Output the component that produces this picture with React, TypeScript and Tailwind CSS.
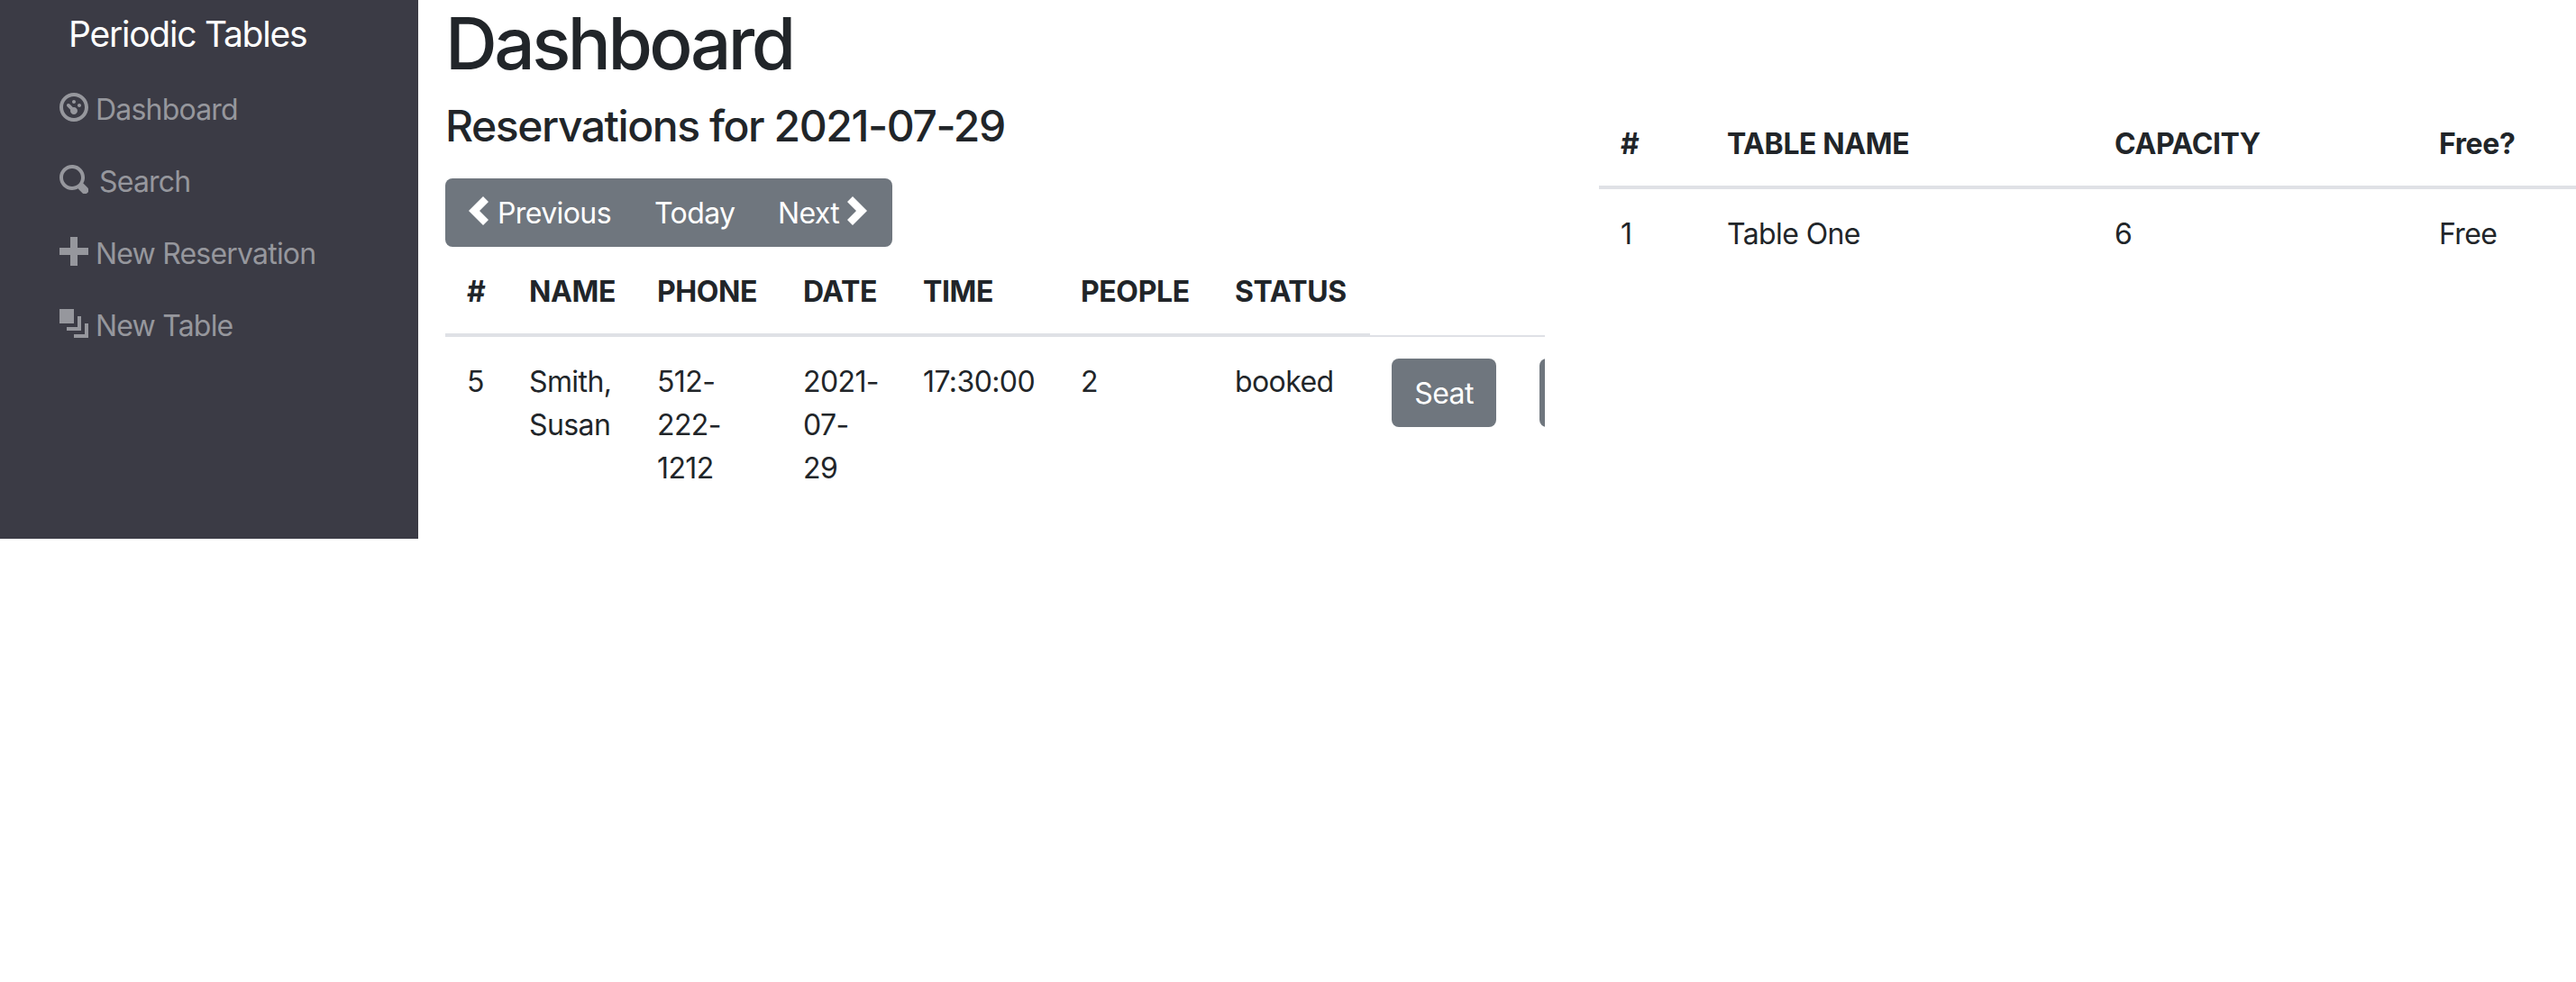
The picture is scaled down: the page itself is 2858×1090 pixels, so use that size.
import React from "react";

const P: Record<string, string> = {
  dashboard:
    "M4 0c-2.2 0-4 1.8-4 4s1.8 4 4 4 4-1.8 4-4-1.8-4-4-4zm0 1c1.66 0 3 1.34 3 3s-1.34 3-3 3-3-1.34-3-3 1.34-3 3-3zm0 1c-.28 0-.5.22-.5.5s.22.5.5.5.5-.22.5-.5-.22-.5-.5-.5zm-1.66 1a.5.5 0 0 0-.19.84l.91.91c-.02.08-.06.16-.06.25 0 .55.45 1 1 1s1-.45 1-1-.45-1-1-1c-.09 0-.17.04-.25.06l-.91-.91a.5.5 0 0 0-.44-.16.5.5 0 0 0-.06 0zm3.16 0c-.28 0-.5.22-.5.5s.22.5.5.5.5-.22.5-.5-.22-.5-.5-.5z",
  search:
    "M3.5 0c-1.93 0-3.5 1.57-3.5 3.5s1.57 3.5 3.5 3.5c.59 0 1.17-.14 1.66-.41a1 1 0 0 0 .13.13l1 1a1.02 1.02 0 1 0 1.44-1.44l-1-1a1 1 0 0 0-.16-.13c.27-.49.44-1.06.44-1.66 0-1.93-1.57-3.5-3.5-3.5zm0 1c1.39 0 2.5 1.11 2.5 2.5 0 .66-.24 1.27-.66 1.72-.01.01-.02.02-.03.03a1 1 0 0 0-.13.13c-.44.4-1.04.63-1.69.63-1.39 0-2.5-1.11-2.5-2.5s1.11-2.5 2.5-2.5z",
  plus: "M3 0v3h-3v2h3v3h2v-3h3v-2h-3v-3h-2z",
  layers: "M0 0v4h4v-4h-4zm5 2v3h-3v1h4v-4h-1zm2 2v3h-3v1h4v-4h-1z",
  left: "M5 0l-4 4 4 4 1.5-1.5-2.5-2.5 2.5-2.5-1.5-1.5z",
  right: "M2.5 0l-1.5 1.5 2.5 2.5-2.5 2.5 1.5 1.5 4-4-4-4z",
};

function Icon({ name, className }: { name: string; className: string }) {
  return (
    <svg viewBox="0 0 8 8" className={className} fill="currentColor" aria-hidden="true">
      <path d={P[name]} />
    </svg>
  );
}

const nav = [
  { icon: "dashboard", label: "Dashboard", gap: "gap-[8px]" },
  { icon: "search", label: "Search", gap: "gap-[12px]" },
  { icon: "plus", label: "New Reservation", gap: "gap-[8px]" },
  { icon: "layers", label: "New Table", gap: "gap-[8px]" },
];

const th = "px-[24px] pt-[26px] pb-[22px] text-left font-bold border-b-2 border-[#dfe1e6] whitespace-nowrap align-top tracking-[-0.4px]";
const td = "px-[24px] pt-[26px] pb-[22px] border-t-2 border-[#dfe1e6] align-top tracking-[-0.6px]";
const tdBtn = "px-[24px] pt-[24px] pb-[24px] border-t-2 border-[#dfe1e6] align-top tracking-[-0.6px]";

export default function App() {
  return (
    <div className="flex items-start w-[2858px] h-[1090px] overflow-hidden bg-white text-[32px] leading-[48px] text-[#212529] font-['Inter','Liberation_Sans',sans-serif]">
      <aside className="w-[464px] h-[598px] shrink-0 bg-[#3b3b45] pl-[66px]">
        <div className="pl-[10px] h-[76px] mb-[6px] flex items-center text-[39px] tracking-[-1.25px] text-white">Periodic Tables</div>
        <nav className="flex flex-col">
          {nav.map((n) => (
            <a key={n.label} className={`h-[80px] flex items-center ${n.gap} text-[#96979d] tracking-[-0.8px]`}>
              <Icon name={n.icon} className="w-[32px] h-[32px] -mt-[6px]" />
              <span>{n.label}</span>
            </a>
          ))}
        </nav>
      </aside>

      <main className="w-[1280px] shrink-0 px-[30px]">
        <h1 className="h-[96px] text-[80px] leading-[96px] font-medium tracking-[-3.5px]">Dashboard</h1>
        <h4 className="mt-[15px] h-[58px] text-[48px] leading-[58px] font-medium tracking-[-1.42px]">Reservations for 2021-07-29</h4>
        <div className="mt-[29px] w-[496px] h-[76px] rounded-[8px] bg-[#6f767e] text-white flex items-center pl-[26px] tracking-[-0.6px]">
          <span className="flex items-center w-[206px] pt-[2px]">
            <Icon name="left" className="w-[32px] h-[32px] -mt-[6px] -ml-[4px] mr-[4px]" />
            Previous
          </span>
          <span className="w-[137px] pt-[2px]">Today</span>
          <span className="flex items-center pt-[2px]">
            Next
            <Icon name="right" className="w-[32px] h-[32px] -mt-[6px] ml-[5px]" />
          </span>
        </div>
        <div className="w-[1220px] overflow-hidden">
          <table className="border-separate border-spacing-0 table-fixed w-[1420px]">
            <colgroup>
              <col className="w-[69px]" />
              <col className="w-[142px]" />
              <col className="w-[162px]" />
              <col className="w-[133px]" />
              <col className="w-[175px]" />
              <col className="w-[171px]" />
              <col className="w-[174px]" />
              <col className="w-[164px]" />
              <col className="w-[230px]" />
            </colgroup>
            <thead>
              <tr>
                <th className={th}>#</th>
                <th className={th}>NAME</th>
                <th className={th}>PHONE</th>
                <th className={th}>DATE</th>
                <th className={th}>TIME</th>
                <th className={th}>PEOPLE</th>
                <th className={th}>STATUS</th>
              </tr>
            </thead>
            <tbody>
              <tr>
                <td className={td}>5</td>
                <td className={td}>Smith, Susan</td>
                <td className={td}>512-222-1212</td>
                <td className={td}>2021-07-29</td>
                <td className={td}>17:30:00</td>
                <td className={td}>2</td>
                <td className={td}>booked</td>
                <td className={tdBtn}>
                  <button className="w-[116px] h-[76px] rounded-[8px] bg-[#6f767e] text-white pt-[2px]">Seat</button>
                </td>
                <td className={tdBtn}>
                  <button className="w-[116px] h-[76px] rounded-[8px] bg-[#6f767e] text-white pt-[2px]">Edit</button>
                </td>
              </tr>
            </tbody>
          </table>
        </div>
      </main>

      <section className="flex-1 min-w-0 pl-[30px] pt-[110px]">
        <table className="border-separate border-spacing-0 table-fixed w-full">
          <colgroup>
            <col className="w-[118px]" />
            <col className="w-[430px]" />
            <col className="w-[360px]" />
            <col />
          </colgroup>
          <thead>
            <tr>
              <th className={th}>#</th>
              <th className={th}>TABLE NAME</th>
              <th className={th}>CAPACITY</th>
              <th className={th}>Free?</th>
            </tr>
          </thead>
          <tbody>
            <tr>
              <td className={td}>1</td>
              <td className={td}>Table One</td>
              <td className={td}>6</td>
              <td className={td}>Free</td>
            </tr>
          </tbody>
        </table>
      </section>
    </div>
  );
}
